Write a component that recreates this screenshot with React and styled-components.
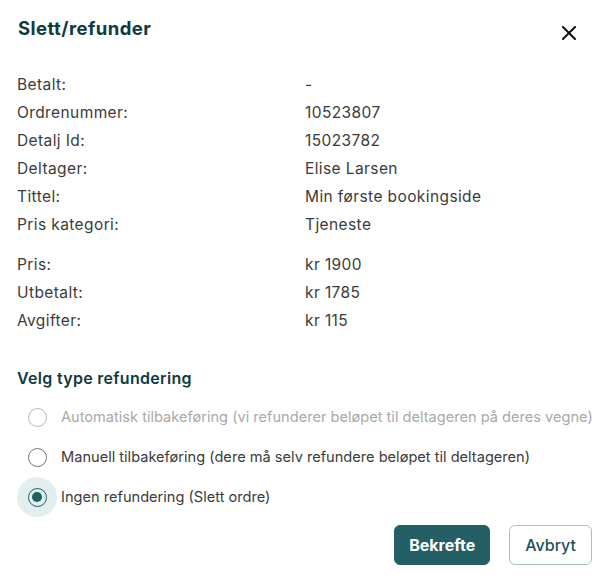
import React, { useState } from "react";
import styled, { createGlobalStyle } from "styled-components";

const Global = createGlobalStyle`
  html, body { margin: 0; padding: 0; background: #fff; }
  body { font-family: Inter, "Noto Sans", sans-serif; color: #333; }
  * { box-sizing: border-box; }
`;

const Dialog = styled.div`
  width: 610px;
  height: 579px;
  padding: 0 18px 0 17px;
  display: flex;
  flex-direction: column;
`;

const Header = styled.div`
  display: flex;
  justify-content: space-between;
  align-items: center;
  height: 56px;
`;

const Title = styled.h2`
  margin: 0 0 0 1px;
  font-size: 18.5px;
  font-weight: 700;
  color: #0f3b3d;
  letter-spacing: 0.45px;
`;

const CloseButton = styled.button`
  border: 0;
  background: none;
  padding: 0;
  width: 24px;
  height: 24px;
  display: flex;
  align-items: center;
  justify-content: center;
  margin-top: 10px;
  margin-right: 11px;
  cursor: pointer;
`;

const InfoGrid = styled.div`
  display: grid;
  grid-template-columns: 288px 1fr;
  grid-auto-rows: 28px;
  align-items: center;
  margin-top: ${(p) => p.$top}px;
  font-size: 15.5px;
  letter-spacing: 0.4px;
  color: #3b3b3b;
`;

const Cell = styled.div`
  line-height: 28px;
  white-space: nowrap;
`;

const SectionTitle = styled.h3`
  margin: 29px 0 0;
  font-size: 16px;
  font-weight: 600;
  color: #0f3b3d;
  line-height: 28px;
  letter-spacing: 0.3px;
`;

const RadioList = styled.div`
  display: flex;
  flex-direction: column;
  margin-top: 5px;
`;

const RadioRow = styled.label`
  display: flex;
  align-items: center;
  height: 40px;
  font-size: 14.6px;
  white-space: nowrap;
  color: ${(p) => (p.$disabled ? "#a9a9a9" : "#3b3b3b")};
  cursor: ${(p) => (p.$disabled ? "default" : "pointer")};
`;

const Halo = styled.span`
  width: 40px;
  height: 40px;
  border-radius: 50%;
  display: flex;
  align-items: center;
  justify-content: center;
  background: ${(p) => (p.$checked ? "#e3eeee" : "transparent")};
  margin-right: 4px;
  flex-shrink: 0;
`;

const Circle = styled.span`
  width: 19px;
  height: 19px;
  border-radius: 50%;
  border: 1.8px solid
    ${(p) => (p.$checked ? "#1c6166" : p.$disabled ? "#b8b8b8" : "#767676")};
  display: flex;
  align-items: center;
  justify-content: center;
`;

const Dot = styled.span`
  width: 10px;
  height: 10px;
  border-radius: 50%;
  background: #1c6166;
`;

const Actions = styled.div`
  display: flex;
  justify-content: flex-end;
  gap: 19px;
  margin-top: 8px;
`;

const Button = styled.button`
  height: 40px;
  padding: 0 ${(p) => (p.$primary ? 14 : 15)}px;
  border-radius: 6px;
  font-family: Inter, "Noto Sans", sans-serif;
  font-size: 16px;
  font-weight: ${(p) => (p.$primary ? 700 : 500)};
  background: ${(p) => (p.$primary ? "#245f65" : "#fff")};
  color: ${(p) => (p.$primary ? "#fff" : "#1c5257")};
  border: 1px solid ${(p) => (p.$primary ? "#245f65" : "#a7bfc1")};
  cursor: pointer;
`;

const group1 = [
  ["Betalt:", "-"],
  ["Ordrenummer:", "10523807"],
  ["Detalj Id:", "15023782"],
  ["Deltager:", "Elise Larsen"],
  ["Tittel:", "Min første bookingside"],
  ["Pris kategori:", "Tjeneste"],
];
const group2 = [
  ["Pris:", "kr 1900"],
  ["Utbetalt:", "kr 1785"],
  ["Avgifter:", "kr 115"],
];

const options = [
  { id: "auto", label: "Automatisk tilbakeføring (vi refunderer beløpet til deltageren på deres vegne)", disabled: true },
  { id: "manual", label: "Manuell tilbakeføring (dere må selv refundere beløpet til deltageren)" },
  { id: "none", label: "Ingen refundering (Slett ordre)" },
];

export default function App() {
  const [value, setValue] = useState("none");
  return (
    <>
      <Global />
      <Dialog>
        <Header>
          <Title>Slett/refunder</Title>
          <CloseButton aria-label="Lukk">
            <svg width="14" height="14" viewBox="0 0 14 14">
              <path d="M1 1L13 13M13 1L1 13" stroke="#111" strokeWidth="2" strokeLinecap="square" />
            </svg>
          </CloseButton>
        </Header>
        <InfoGrid $top={15}>
          {group1.map(([k, v]) => (
            <React.Fragment key={k}>
              <Cell>{k}</Cell>
              <Cell>{v}</Cell>
            </React.Fragment>
          ))}
        </InfoGrid>
        <InfoGrid $top={12}>
          {group2.map(([k, v]) => (
            <React.Fragment key={k}>
              <Cell>{k}</Cell>
              <Cell>{v}</Cell>
            </React.Fragment>
          ))}
        </InfoGrid>
        <SectionTitle>Velg type refundering</SectionTitle>
        <RadioList>
          {options.map((o) => {
            const checked = value === o.id;
            return (
              <RadioRow
                key={o.id}
                $disabled={o.disabled}
                onClick={() => !o.disabled && setValue(o.id)}
              >
                <Halo $checked={checked}>
                  <Circle $checked={checked} $disabled={o.disabled}>
                    {checked && <Dot />}
                  </Circle>
                </Halo>
                {o.label}
              </RadioRow>
            );
          })}
        </RadioList>
        <Actions>
          <Button $primary>Bekrefte</Button>
          <Button>Avbryt</Button>
        </Actions>
      </Dialog>
    </>
  );
}
